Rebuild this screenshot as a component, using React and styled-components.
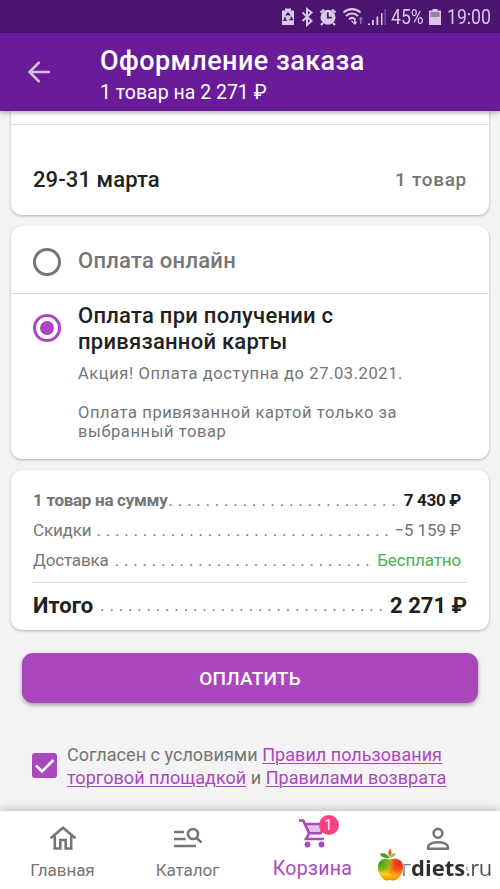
import React, { useState } from "react";
import styled, { createGlobalStyle } from "styled-components";

const colors = {
  status: "#4a1470",
  header: "#6a1b99",
  main: "#ab47bc",
  page: "#f3f3f3",
  title: "#212121",
  content: "#757575",
  line: "#dedede",
  green: "#4caf50",
  badge: "#ff4081",
};

const GlobalStyle = createGlobalStyle`
  * {
    box-sizing: border-box;
  }
  body {
    margin: 0;
    font-family: Roboto, "Noto Sans", sans-serif;
    background-color: ${colors.page};
  }
`;

const Screen = styled.div`
  position: relative;
  display: flex;
  flex-direction: column;
  width: 500px;
  height: 889px;
  overflow: hidden;
  background-color: ${colors.page};
`;

const StatusBar = styled.div`
  display: flex;
  align-items: center;
  height: 33px;
  padding-left: 281px;
  color: #d9c8e4;
  background-color: ${colors.status};
  z-index: 2;
`;
const StatusIcons = styled.svg`
  flex: none;
  width: 106px;
  height: 33px;
`;
const StatusText = styled.span`
  width: ${(props) => props.$width}px;
  margin-left: ${(props) => props.$gap}px;
  font-size: 20.5px;
  line-height: 34px;
  white-space: nowrap;
  transform: scaleX(0.86);
  transform-origin: left;
`;
const BatteryIcon = styled.svg`
  flex: none;
  width: 12px;
  height: 33px;
  margin-left: 5px;
`;

const Header = styled.header`
  display: flex;
  height: 78px;
  padding: 13px 0 0 26px;
  color: white;
  background-color: ${colors.header};
  box-shadow: 0 1px 6px rgba(0, 0, 0, 0.4);
  z-index: 1;
`;
const BackButton = styled.button`
  width: 26px;
  height: 26px;
  margin: 13px 48px 0 0;
  padding: 0;
  border: none;
  background: none;
`;
const HeaderTitle = styled.h1`
  margin: 0;
  font-size: 27px;
  font-weight: 500;
  line-height: 31px;
  letter-spacing: 0.45px;
`;
const HeaderSub = styled.p`
  margin: 3px 0 0;
  font-size: 19.5px;
  line-height: 26px;
`;

const Content = styled.main`
  flex: 1;
  padding: 0 11px;
`;
const Card = styled.section`
  margin-bottom: 11px;
  border-radius: ${(props) => (props.$cut ? "0 0 11px 11px" : "11px")};
  background-color: white;
  box-shadow: 0 1px 3px rgba(0, 0, 0, 0.28);
`;
const CutLine = styled.div`
  height: 14px;
  border-bottom: 1px solid ${colors.line};
`;
const Delivery = styled.div`
  display: flex;
  justify-content: space-between;
  height: 90px;
  padding: 41px 22px 0;
  line-height: 28px;
  font-weight: 500;

  .date {
    font-size: 22px;
    letter-spacing: 0.1px;
    color: ${colors.title};
  }
  .count {
    font-size: 19px;
    letter-spacing: 0.7px;
    color: ${colors.content};
  }
`;

const PayOption = styled.div`
  display: flex;
  height: ${(props) => props.$height}px;
  padding: ${(props) => props.$top}px 22px 0;
  border-bottom: ${(props) => (props.$line ? `1px solid ${colors.line}` : "none")};
  cursor: pointer;
`;
const Radio = styled.span`
  display: flex;
  flex: none;
  align-items: center;
  justify-content: center;
  width: 28px;
  height: 28px;
  margin: ${(props) => props.$top}px 17px 0 0;
  border: 3px solid ${(props) => (props.$checked ? colors.main : colors.content)};
  border-radius: 50%;

  &::after {
    content: "";
    display: ${(props) => (props.$checked ? "block" : "none")};
    width: 14px;
    height: 14px;
    border-radius: 50%;
    background-color: ${colors.main};
  }
`;
const PayTitle = styled.div`
  font-size: 22px;
  font-weight: 500;
  line-height: 26.4px;
  letter-spacing: ${(props) => props.$spacing}px;
  color: ${(props) => (props.$checked ? colors.title : colors.content)};
`;
const PayNote = styled.p`
  margin: ${(props) => props.$top}px 0 0;
  font-size: 16.5px;
  line-height: 19.5px;
  letter-spacing: 0.59px;
  color: ${colors.content};
`;

const Summary = styled(Card)`
  height: 160px;
  padding: 15px 22px 0;
`;
const SumRow = styled.div`
  display: flex;
  justify-content: space-between;
  height: 30px;
  padding-right: 6px;
  font-size: 17px;
  line-height: 30px;
  letter-spacing: ${(props) => (props.$bold ? -0.3 : -0.15)}px;
  white-space: nowrap;
  color: ${colors.content};

  .label {
    font-weight: ${(props) => (props.$bold ? 700 : 400)};
  }
  .value {
    font-weight: ${(props) => (props.$bold ? 700 : 400)};
    color: ${(props) => props.$color || colors.content};
  }
`;
const Dots = styled.span`
  flex: 1;
  min-width: 0;
  padding-left: ${(props) => props.$left}px;
  font-size: 17px;
  letter-spacing: 4.8px;
`;
const TotalRow = styled(SumRow)`
  height: 44px;
  margin-top: 7px;
  padding-right: 0;
  border-top: 1px solid ${colors.line};
  font-size: 22px;
  line-height: 45px;
  letter-spacing: 0;

  .label {
    color: ${colors.title};
  }
`;

const PayButton = styled.button`
  display: block;
  width: 456px;
  height: 50px;
  margin: 23px 0 0 11px;
  border: none;
  border-radius: 11px;
  font-family: inherit;
  font-size: 19px;
  font-weight: 500;
  letter-spacing: 0.2px;
  color: white;
  background-color: ${colors.main};
  box-shadow: 0 2px 4px rgba(0, 0, 0, 0.35);
`;
const Agree = styled.div`
  display: flex;
  margin-top: 41px;
  padding-left: 21px;
`;
const CheckBox = styled.span`
  flex: none;
  width: 25px;
  height: 25px;
  margin: 9px 10px 0 0;
  border-radius: 3px;
  background-color: ${colors.main};

  svg {
    display: block;
  }
`;
const AgreeText = styled.p`
  margin: 0;
  font-size: 18px;
  line-height: 22.7px;
  letter-spacing: 0.04px;
  white-space: nowrap;
  color: ${colors.content};

  a {
    color: ${colors.main};
    text-decoration: underline;
    text-decoration-thickness: 1px;
    text-underline-offset: 2px;
  }
`;

const BottomNav = styled.nav`
  display: grid;
  grid-template-columns: repeat(4, 1fr);
  height: 78px;
  background-color: white;
  box-shadow: 0 0 10px rgba(0, 0, 0, 0.3);
  z-index: 1;
`;
const NavItem = styled.a`
  display: flex;
  flex-direction: column;
  align-items: center;
  color: ${(props) => (props.$active ? colors.main : colors.content)};

  .icon {
    position: relative;
    height: ${(props) => (props.$active ? 44 : 45)}px;
    padding-top: ${(props) => (props.$active ? 7 : 13)}px;
  }
  .label {
    font-size: ${(props) => (props.$active ? 19.5 : 17)}px;
    line-height: 28px;
    letter-spacing: ${(props) => (props.$active ? 0.3 : -0.05)}px;
  }
  svg {
    display: block;
  }
`;
const Badge = styled.span`
  position: absolute;
  top: 4px;
  left: 21px;
  width: 20px;
  height: 20px;
  border-radius: 50%;
  font-size: 14px;
  line-height: 20px;
  text-align: center;
  color: white;
  background-color: ${colors.badge};
`;

const Watermark = styled.div`
  position: absolute;
  left: 376px;
  bottom: 7px;
  display: flex;
  align-items: flex-end;
  z-index: 3;
  font-family: "Open Sans", sans-serif;
  font-size: 22px;
  line-height: 29px;
  color: #2f2f2f;
  -webkit-text-stroke: 5px white;
  paint-order: stroke fill;
  filter: drop-shadow(0 0 1px white);

  b {
    margin-left: 7px;
  }
  span {
    color: #555;
    letter-spacing: -0.6px;
  }
`;

const BackArrow = () => (
  <svg width="26" height="26" viewBox="0 0 26 26">
    <path
      d="M24 13H3.5M13.5 3L3.5 13l10 10"
      fill="none"
      stroke="#d6bfe6"
      strokeWidth="2.5"
    />
  </svg>
);

// battery saver, bluetooth, alarm, wifi, signal
const StatusGlyphs = () => (
  <StatusIcons viewBox="0 0 106 33" fill="currentColor">
    <path d="M4 8.500h6v2h3v14.500H1V10.500h3z" />
    <path
      d="M5.200 15.500L7 13l1.800 2.500M10 16.800l1.200 2.700H8.300M5.800 20.300H3.100l1.300-3"
      fill="none"
      stroke={colors.status}
      strokeWidth="1.5"
    />
    <path
      d="M21.500 12.500l9 8.500-4.500 4V9l4.500 3.500-9 8.500"
      fill="none"
      stroke="currentColor"
      strokeWidth="2"
    />
    <circle cx="47" cy="17.200" r="7.500" />
    <path
      d="M39.500 12.500l3.500-3M54.500 12.500L51 9.500M42 23l-2 2M52 23l2 2"
      stroke="currentColor"
      strokeWidth="2.2"
    />
    <path
      d="M46.800 12.500v5.200h4"
      fill="none"
      stroke={colors.status}
      strokeWidth="1.8"
    />
    <path
      d="M62.500 12.500c5-4.500 12-4.500 17 0M65 16c3.500-3.300 8.500-3.300 12 0M68 19.300c2-1.800 4.200-1.800 6 0"
      fill="none"
      stroke="currentColor"
      strokeWidth="2.1"
    />
    <path d="M69.500 20.500l2.500 2.500v-2z" />
    <path d="M73 18.500h1.600v3.500h1.700l-2.500 3-2.500-3H73z" />
    <path d="M79 24h1.600v-4.500h1.700l-2.500-3-2.500 3H79z" opacity=".5" />
    <path d="M87 23.500h2V25h-2zM91 20h1.800v5H91zM95.500 16.500h1.800V25h-1.800zM100 13h1.500v12H100z" />
    <path d="M103.500 9h1.200v16h-1.200z" opacity=".4" />
  </StatusIcons>
);

const HomeIcon = () => (
  <svg width="28" height="26" viewBox="0 0 28 26">
    <path
      d="M1.500 14.200L14 3.700l12.500 10.500M5.800 12v12.500h5.500v-8.500h5.400v8.500h5.500V12"
      fill="none"
      stroke="currentColor"
      strokeWidth="2.6"
    />
  </svg>
);

const CatalogIcon = () => (
  <svg width="28" height="26" viewBox="0 0 28 26">
    <g fill="none" stroke="currentColor" strokeWidth="2.6">
      <path d="M0 8h10M0 15h11.500M0 22h22" />
      <circle cx="19" cy="10" r="5" />
      <path d="M22.500 13.700l5 4.800" />
    </g>
  </svg>
);

const CartIcon = () => (
  <svg width="30" height="30" viewBox="0 0 30 30">
    <path d="M7 6h19l-4.500 9.500H11z" fill="#e3c0e9" />
    <path
      d="M1 2.500h4.200L11.200 15.500 8 21h18M6.200 6H22M10.500 15.300h12l4-7"
      fill="none"
      stroke="currentColor"
      strokeWidth="2.6"
    />
    <circle cx="9.500" cy="26.500" r="2.900" fill="currentColor" />
    <circle cx="23.500" cy="26.500" r="2.900" fill="currentColor" />
  </svg>
);

const ProfileIcon = () => (
  <svg width="28" height="28" viewBox="0 0 28 28">
    <g fill="none" stroke="currentColor" strokeWidth="2.6">
      <circle cx="14" cy="9.300" r="4.400" />
      <path d="M4.200 24.700v-2c0-2.900 5.500-4.500 9.800-4.500s9.800 1.600 9.800 4.500v2z" />
    </g>
  </svg>
);

const AppleLogo = () => (
  <svg width="28" height="34" viewBox="0 0 28 34">
    <defs>
      <radialGradient id="red" cx="0.85" cy="0.2" r="0.7">
        <stop offset="0" stopColor="#e8281c" />
        <stop offset="0.45" stopColor="#f4581c" />
        <stop offset="1" stopColor="#f4581c" stopOpacity="0" />
      </radialGradient>
      <radialGradient id="green" cx="0.1" cy="0.2" r="0.55">
        <stop offset="0" stopColor="#3f9f23" />
        <stop offset="0.6" stopColor="#7dba1f" stopOpacity="0.9" />
        <stop offset="1" stopColor="#c8d41c" stopOpacity="0" />
      </radialGradient>
      <linearGradient id="yellow" x1="0" y1="0" x2="0" y2="1">
        <stop offset="0.3" stopColor="#ffc21c" />
        <stop offset="0.7" stopColor="#ffd21c" />
        <stop offset="1" stopColor="#f09000" />
      </linearGradient>
    </defs>
    {["yellow", "red", "green"].map((fill) => (
      <path
        key={fill}
        d="M14 12C10 9.500 2 10.500 2 19.500 2 26 7 32.500 11 32.500c1.500 0 2-.5 3-.5s2 .5 3.500.5C22 32.500 27 26 27 19 27 10.500 18.500 9.500 14 12z"
        fill={`url(#${fill})`}
      />
    ))}
    <path d="M4 5.500c4-1 8 .5 9.500 4.500C9 10.500 5 9.500 4 5.500z" fill="#4a9e24" />
    <path d="M13.500 9c-2-3-1.500-6 .5-8.500 2 2.500 2.500 5.500-.5 8.500z" fill="#ef6a1c" />
    <path d="M14 9.500c.5-3 2.500-4.500 5.500-4.500-.5 3-2.500 4.500-5.500 4.500z" fill="#8bc34a" />
  </svg>
);

const sums = [
  { label: "1 товар на сумму", value: "7 430 ₽", dots: 25, left: 1, bold: true, color: colors.title },
  { label: "Скидки", value: "−5 159 ₽", dots: 32, left: 5 },
  { label: "Доставка", value: "Бесплатно", dots: 28, left: 6, color: colors.green },
];

const navs = [
  { name: "Главная", icon: <HomeIcon /> },
  { name: "Каталог", icon: <CatalogIcon /> },
  { name: "Корзина", icon: <CartIcon />, badge: 1 },
  { name: "Профиль", icon: <ProfileIcon /> },
];

const App = () => {
  const [pay, setPay] = useState(1);
  const [menu, setMenu] = useState(2);

  return (
    <Screen>
      <GlobalStyle />
      <StatusBar>
        <StatusGlyphs />
        <StatusText $width={33} $gap={4}>
          45%
        </StatusText>
        <BatteryIcon viewBox="0 0 12 33" fill="currentColor">
          <path d="M3.500 9h5v1.500H12V25H0V10.500h3.500z" />
          <path d="M1.500 12h9v5h-9z" fill="#9c7bb2" />
        </BatteryIcon>
        <StatusText $width={45} $gap={6}>
          19:00
        </StatusText>
      </StatusBar>

      <Header>
        <BackButton>
          <BackArrow />
        </BackButton>
        <div>
          <HeaderTitle>Оформление заказа</HeaderTitle>
          <HeaderSub>1 товар на 2 271 ₽</HeaderSub>
        </div>
      </Header>

      <Content>
        <Card $cut>
          <CutLine />
          <Delivery>
            <span className="date">29-31 марта</span>
            <span className="count">1 товар</span>
          </Delivery>
        </Card>

        <Card>
          <PayOption $height={68} $top={22} $line onClick={() => setPay(0)}>
            <Radio $top={0.4} $checked={pay === 0} />
            <PayTitle $spacing={0.25} $checked={pay === 0}>
              Оплата онлайн
            </PayTitle>
          </PayOption>
          <PayOption $height={165} $top={9} onClick={() => setPay(1)}>
            <Radio $top={11} $checked={pay === 1} />
            <div>
              <PayTitle $spacing={0.25} $checked={pay === 1}>
                Оплата при получении с<br />
                привязанной карты
              </PayTitle>
              <PayNote $top={8}>Акция! Оплата доступна до 27.03.2021.</PayNote>
              <PayNote $top={19.5}>
                Оплата привязанной картой только за
                <br />
                выбранный товар
              </PayNote>
            </div>
          </PayOption>
        </Card>

        <Summary>
          {sums.map((el, index) => (
            <SumRow key={index} $bold={el.bold} $color={el.color}>
              <span className="label">{el.label}</span>
              <Dots $left={el.left}>{".".repeat(el.dots)}</Dots>
              <span className="value">{el.value}</span>
            </SumRow>
          ))}
          <TotalRow $bold $color={colors.title}>
            <span className="label">Итого</span>
            <Dots $left={7}>{".".repeat(31)}</Dots>
            <span className="value">2 271 ₽</span>
          </TotalRow>
        </Summary>

        <PayButton>ОПЛАТИТЬ</PayButton>

        <Agree>
          <CheckBox>
            <svg width="25" height="25" viewBox="0 0 25 25">
              <path
                d="M4 12.500l6 6L21.500 7"
                fill="none"
                stroke="white"
                strokeWidth="2.6"
              />
            </svg>
          </CheckBox>
          <AgreeText>
            Согласен с условиями <a>Правил пользования</a>
            <br />
            <a>торговой площадкой</a> и <a>Правилами возврата</a>
          </AgreeText>
        </Agree>
      </Content>

      <BottomNav>
        {navs.map((el, index) => (
          <NavItem
            key={index}
            $active={menu === index}
            onClick={() => setMenu(index)}
          >
            <span className="icon">
              {el.icon}
              {el.badge && <Badge>{el.badge}</Badge>}
            </span>
            <span className="label">{el.name}</span>
          </NavItem>
        ))}
      </BottomNav>

      <Watermark>
        <AppleLogo />
        <b>diets</b>
        <span>.ru</span>
      </Watermark>
    </Screen>
  );
};

export default App;
